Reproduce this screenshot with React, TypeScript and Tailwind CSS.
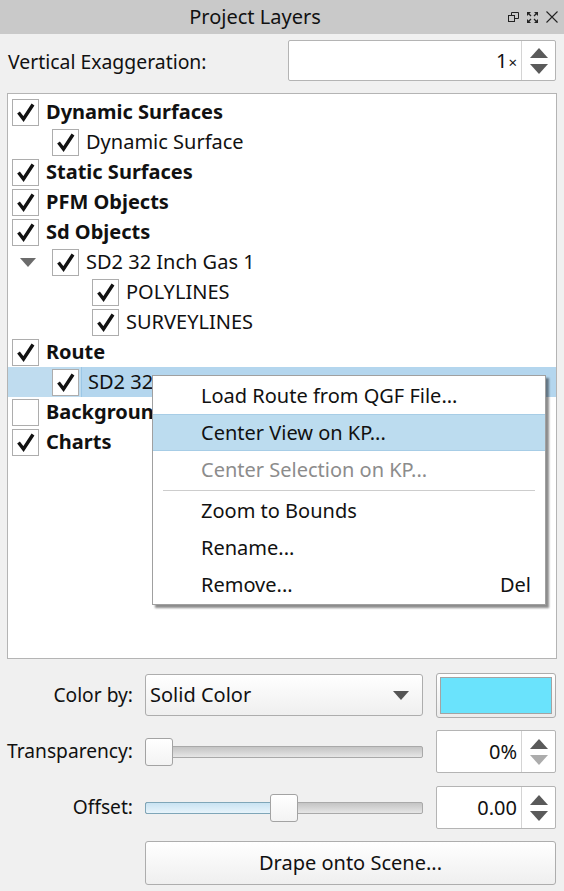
import type { ReactNode } from 'react';

/* Types */
interface Layer {
  label: string;
  level: number;
  bold?: boolean;
  checked: boolean;
  expander?: boolean;
  selected?: boolean;
}

const layers: Layer[] = [
  { label: 'Dynamic Surfaces', level: 0, bold: true, checked: true },
  { label: 'Dynamic Surface', level: 1, checked: true },
  { label: 'Static Surfaces', level: 0, bold: true, checked: true },
  { label: 'PFM Objects', level: 0, bold: true, checked: true },
  { label: 'Sd Objects', level: 0, bold: true, checked: true },
  { label: 'SD2 32 Inch Gas 1', level: 1, checked: true, expander: true },
  { label: 'POLYLINES', level: 2, checked: true },
  { label: 'SURVEYLINES', level: 2, checked: true },
  { label: 'Route', level: 0, bold: true, checked: true },
  // the rest of this label sits under the context menu
  { label: 'SD2 32', level: 1, checked: true, selected: true },
  { label: 'Background', level: 0, bold: true, checked: false },
  { label: 'Charts', level: 0, bold: true, checked: true },
];

function CheckBox({ checked }: { checked: boolean }) {
  return (
    <div className="w-[27px] h-[27px] shrink-0 border border-[#adadad] bg-white flex items-center justify-center">
      {checked && (
        <svg width="20" height="20" viewBox="0 0 20 20">
          <path d="M2.5 10.5 L7.5 17 L17 2.5" fill="none" stroke="#111" strokeWidth="3.4" strokeLinejoin="miter" />
        </svg>
      )}
    </div>
  );
}

function SpinArrows({ downDisabled }: { downDisabled?: boolean }) {
  return (
    <div className="w-[34px] border-l border-[#d4d4d4] flex flex-col items-center justify-center gap-[6px]">
      <svg width="18" height="10" viewBox="0 0 18 10">
        <path d="M9 0 L18 10 L0 10 Z" fill="#5a5a5a" />
      </svg>
      <svg width="18" height="10" viewBox="0 0 18 10">
        <path d="M0 0 L18 0 L9 10 Z" fill={downDisabled ? '#acacac' : '#5a5a5a'} />
      </svg>
    </div>
  );
}

function SpinBox({ value, className, downDisabled }: { value: ReactNode; className: string; downDisabled?: boolean }) {
  return (
    <div className={`flex bg-white border border-[#b4b4b4] rounded-[2px] ${className}`}>
      <div className="flex-1 flex items-center justify-end pr-[4px]">{value}</div>
      <SpinArrows downDisabled={downDisabled} />
    </div>
  );
}

function Slider({ fill, pos }: { fill: boolean; pos: number }) {
  return (
    <div className="relative w-[278px] h-[28px] flex items-center">
      <div className="w-full h-[12px] border border-[#a9a9a9] rounded-[2px] bg-gradient-to-b from-[#c4c4c4] to-[#e6e6e6] relative overflow-hidden">
        {fill && (
          <div className="absolute left-0 top-0 bottom-0 bg-gradient-to-b from-[#c9e3f2] to-[#e8f4fb] border-r border-[#7fa6b8]" style={{ width: pos }} />
        )}
      </div>
      {fill && <div className="absolute left-0 h-[12px] border border-[#7fa6b8] rounded-[2px] pointer-events-none" style={{ width: pos + 2 }} />}
      <div
        className="absolute top-0 w-[28px] h-[28px] border border-[#a3a3a3] rounded-[3px] bg-gradient-to-b from-white to-[#f3f3f3]"
        style={{ left: pos }}
      />
    </div>
  );
}

const menuItems = [
  { label: 'Load Route from QGF File...' },
  { label: 'Center View on KP...', active: true },
  { label: 'Center Selection on KP...', disabled: true },
  { sep: true, label: '' },
  { label: 'Zoom to Bounds' },
  { label: 'Rename...' },
  { label: 'Remove...', shortcut: 'Del' },
];

export default function App() {
  return (
    <div
      className="relative w-[564px] h-[891px] bg-[#f0f0f0] text-[#111] overflow-hidden flex flex-col"
      style={{ fontFamily: '"Noto Sans", "Open Sans", sans-serif' }}
    >
      {/* Title bar */}
      <div className="h-[34px] bg-[#c9c9c9] flex items-center relative">
        <div className="flex-1 text-center text-[20px] pl-[2px] pr-[56px]">Project Layers</div>
        <div className="absolute right-[6px] top-[11px] flex items-center gap-[8px]">
          <svg width="11" height="11" viewBox="0 0 11 11">
            <rect x="0.5" y="3.5" width="6" height="6" fill="none" stroke="#222" />
            <path d="M3.5 3.5 V0.5 H10.5 V6.5 H6.5" fill="none" stroke="#222" />
          </svg>
          <svg width="11" height="11" viewBox="0 0 11 11">
            <path d="M0.5 0.5 L4 4 M10.5 0.5 L7 4 M0.5 10.5 L4 7 M10.5 10.5 L7 7" stroke="#222" strokeWidth="1.3" />
            <path d="M0 0 H4 L0 4 Z M11 0 V4 L7 0 Z M0 11 V7 L4 11 Z M11 11 H7 L11 7 Z" fill="#222" />
          </svg>
          <svg width="12" height="12" viewBox="0 0 12 12">
            <path d="M0.5 0.5 L11.5 11.5 M11.5 0.5 L0.5 11.5" stroke="#222" strokeWidth="1.1" />
          </svg>
        </div>
      </div>

      {/* Vertical exaggeration */}
      <div className="flex items-center justify-between pl-[8px] pr-[8px] mt-[6px] h-[41px]">
        <span className="text-[19.4px] mt-[2px]">Vertical Exaggeration:</span>
        <SpinBox
          className="w-[268px] h-[41px]"
          value={
            <span className="text-[20px]">
              1<span className="text-[15px] ml-[1px]">×</span>
            </span>
          }
        />
      </div>

      {/* Layer tree */}
      <div className="mx-[7px] mt-[12px] h-[566px] bg-white border border-[#b4b4b4] pt-[3px]">
        {layers.map((l, i) => (
          <div
            key={i}
            className={`h-[30px] flex items-center ${l.selected ? 'bg-[#bfdcef]' : ''}`}
            style={{ paddingLeft: 4 + l.level * 40 }}
          >
            <div className="relative flex items-center">
              {l.expander && (
                <svg className="absolute left-[-32px]" width="16" height="9" viewBox="0 0 16 9">
                  <path d="M0 0 H16 L8 9 Z" fill="#6b6b6b" />
                </svg>
              )}
              <CheckBox checked={l.checked} />
            </div>
            <div
              className={`h-full flex items-center pl-[6px] text-[20px] ${l.bold ? 'font-bold' : ''} ${
                l.selected ? 'bg-[#b4d6ee] border-l border-[#9cc7e6] ml-[2px] flex-1' : 'ml-[1px]'
              }`}
            >
              {l.label}
            </div>
          </div>
        ))}
      </div>

      {/* Properties */}
      <div className="grid grid-cols-[133px_1fr] gap-x-[12px] items-center pr-[8px] mt-[14px]">
        <span className="text-[19.2px] text-right">Color by:</span>
        <div className="flex items-center gap-[13px] h-[44px]">
          <div className="w-[278px] h-[42px] border border-[#adadad] rounded-[3px] bg-gradient-to-b from-white to-[#efefef] flex items-center justify-between pl-[4px] pr-[13px]">
            <span className="text-[20px]">Solid Color</span>
            <svg width="16" height="9" viewBox="0 0 16 9">
              <path d="M0 0 H16 L8 9 Z" fill="#555" />
            </svg>
          </div>
          <div className="w-[120px] h-[45px] border border-[#adadad] rounded-[3px] bg-gradient-to-b from-white to-[#ececec] p-[3px]">
            <div className="w-full h-full bg-[#6ae3fc] border border-[#a3a3a3]" />
          </div>
        </div>

        <span className="text-[19.2px] text-right mt-[13px]">Transparency:</span>
        <div className="flex items-center gap-[13px] mt-[13px]">
          <Slider fill={false} pos={0} />
          <SpinBox className="w-[120px] h-[43px]" downDisabled value={<span className="text-[20px]">0%</span>} />
        </div>

        <span className="text-[19.2px] text-right mt-[13px]">Offset:</span>
        <div className="flex items-center gap-[13px] mt-[13px]">
          <Slider fill pos={125} />
          <SpinBox className="w-[120px] h-[43px]" value={<span className="text-[20px]">0.00</span>} />
        </div>

        <span />
        <div className="mt-[12px] h-[44px] border border-[#adadad] rounded-[3px] bg-gradient-to-b from-white to-[#efefef] flex items-center justify-center text-[20px]">
          Drape onto Scene...
        </div>
      </div>

      {/* Context menu */}
      <div className="absolute left-[152px] top-[375px] w-[394px] bg-white border border-[#a0a0a0] py-[1px] shadow-[3px_3px_2px_rgba(0,0,0,0.45)]">
        {menuItems.map((m, i) =>
          m.sep ? (
            <div key={i} className="h-[4px] flex items-center px-[10px]">
              <div className="w-full h-px bg-[#cdcdcd]" />
            </div>
          ) : (
            <div
              key={i}
              className={`h-[37px] flex items-center justify-between pl-[48px] pr-[14px] text-[20px] ${
                m.active ? 'bg-[#bcdcef] border-y border-[#a7cde6]' : ''
              } ${m.disabled ? 'text-[#8c8c8c]' : ''}`}
            >
              <span>{m.label}</span>
              {m.shortcut && <span>{m.shortcut}</span>}
            </div>
          ),
        )}
      </div>
    </div>
  );
}
